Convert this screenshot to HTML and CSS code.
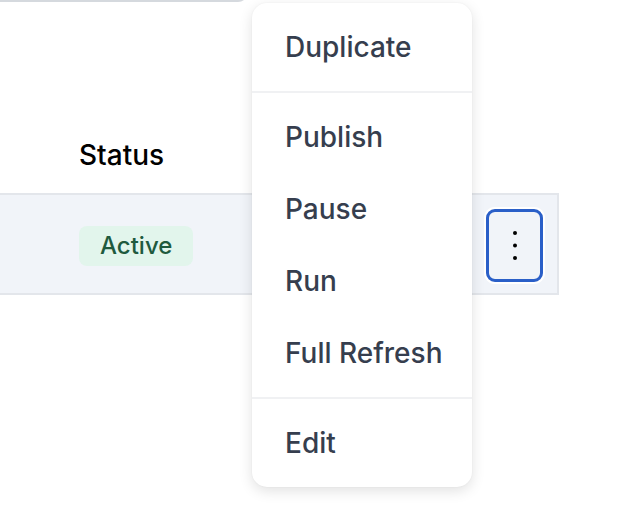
FILE: index.html
```html
<!DOCTYPE html>
<html lang="en">
  <head>
    <meta charset="UTF-8" />
    <meta name="viewport" content="width=device-width, initial-scale=1" />
    <title>Pipelines</title>
    <link rel="stylesheet" href="styles.css">
  </head>
  <body>
    <div class="search-box"></div>
    <div class="table">
      <div class="thead">
        <div class="th">Status</div>
      </div>
      <div class="row">
        <div class="cell-status"><span class="badge">Active</span></div>
        <div class="cell-actions">
          <button class="kebab" aria-label="More actions">
            <svg width="4" height="30" viewBox="0 0 4 30">
              <circle cx="2" cy="2" r="2" fill="#000" />
              <circle cx="2" cy="14.5" r="2" fill="#000" />
              <circle cx="2" cy="27" r="2" fill="#000" />
            </svg>
          </button>
        </div>
      </div>
    </div>
    <!-- dropdown opened from the kebab button -->
    <div class="menu">
      <div class="menu-group">
        <div class="menu-item">Duplicate</div>
      </div>
      <div class="menu-group">
        <div class="menu-item">Publish</div>
        <div class="menu-item">Pause</div>
        <div class="menu-item">Run</div>
        <div class="menu-item">Full Refresh</div>
      </div>
      <div class="menu-group">
        <div class="menu-item">Edit</div>
      </div>
    </div>
  </body>
</html>
```

FILE: styles.css
```css
html {
  overflow: hidden;
}
body {
  font-family: Inter, "Noto Sans", sans-serif;  margin: 0;  min-height: 512px;  background-color: #fff;  position: relative;  overflow: hidden;
}
.search-box {
  width: 246px;  height: 8px;  margin-top: -8px;  border-bottom: 2px solid #d5d9de;  border-right: 2px solid #d5d9de;  border-bottom-right-radius: 10px;
}
.table {
  width: 559px;  margin-top: -2px;
}
.thead {
  height: 193px;  display: flex;  align-items: flex-end;  box-sizing: border-box;  padding: 0 0 18px 79px;
}
.th {
  font-size: 28px;  font-weight: 500;  line-height: 40px;  color: #000;
}
.row {
  display: flex;  align-items: center;  justify-content: space-between;  height: 98px;  background-color: #f1f4f9;
  border-top: 2px solid #e3e6eb;  border-bottom: 2px solid #e3e6eb;  border-right: 2px solid #e3e6eb;
}
.cell-status {
  padding-left: 79px;  padding-top: 4px;
}
.badge {
  display: inline-block;  font-size: 24px;  font-weight: 500;  line-height: 40px;  padding: 0 21px;  border-radius: 8px;
  background-color: #e2f5ec;  color: #1f5a3e;
}
.cell-actions {
  padding-right: 14px;  padding-top: 3px;
}
.kebab {
  width: 57px;  height: 73px;  box-sizing: border-box;  border: 3px solid #2a5fc8;  border-radius: 9px;  background: transparent;
  box-shadow: 0 0 0 2px #fff;  display: flex;  align-items: center;  justify-content: center;  padding: 0;  cursor: pointer;
}
.kebab svg {
  display: block;
}
.menu {
  position: absolute;  left: 252px;  top: 3px;  width: 220px;  background-color: #fff;  border-radius: 15px;
  box-shadow: 0 4px 14px rgba(0, 0, 0, 0.12), 0 0 2px rgba(0, 0, 0, 0.05);
}
.menu-group {
  padding: 8px 0;
}
.menu-group + .menu-group {
  border-top: 2px solid #f0f1f3;
}
.menu-item {
  height: 72px;  line-height: 72px;  padding-left: 33px;  font-size: 28px;  font-weight: 500;  color: #363e4e;  cursor: pointer;
}
```
